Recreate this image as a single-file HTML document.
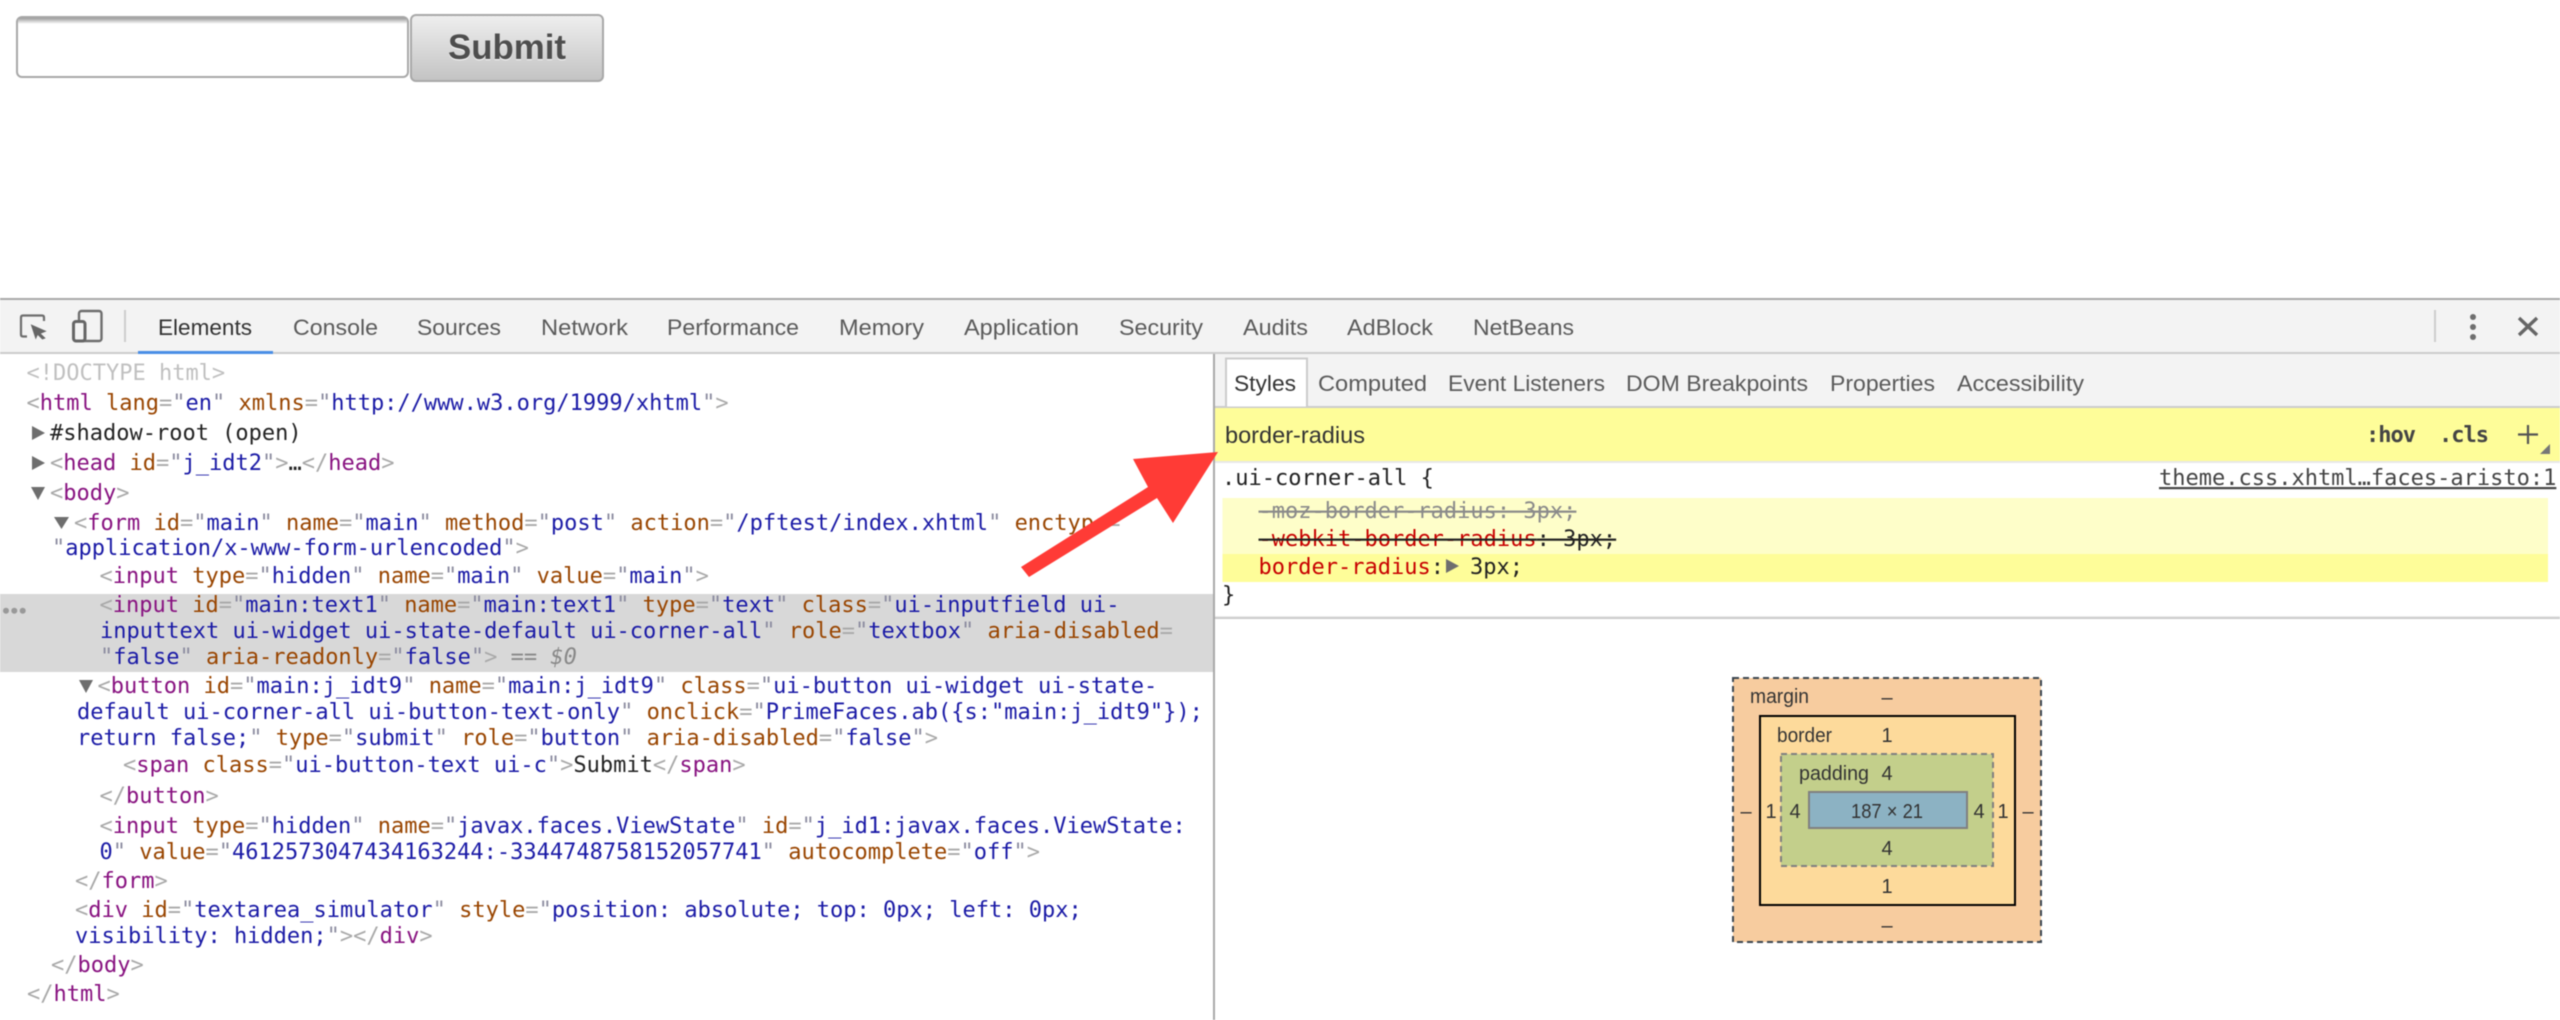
<!DOCTYPE html>
<html lang="en">
<head>
<meta charset="utf-8">
<title>DevTools</title>
<style>
html,body{margin:0;padding:0;background:#fff;width:2560px;height:1020px;overflow:hidden}
svg{display:block;filter:blur(.45px)}
text{white-space:pre}
.s{font-family:"Liberation Sans",Arial,sans-serif;font-size:22.5px;fill:#5a5a5a}
.m{font-family:"DejaVu Sans Mono","Liberation Mono",monospace;font-size:22px;fill:#222}
.b{fill:#a9a9a9}.t{fill:#881280}.n{fill:#994500}.v{fill:#1a1aa6}.q{fill:#8c8ca0}
.bm{font-family:"Liberation Sans",Arial,sans-serif;font-size:20px;fill:#333}
.mid{text-anchor:middle}
</style>
</head>
<body>
<svg xmlns="http://www.w3.org/2000/svg" width="2560" height="1020" viewBox="0 0 2560 1020">
<defs>
<linearGradient id="btn" x1="0" y1="0" x2="0" y2="1"><stop offset="0" stop-color="#efefef"/><stop offset="1" stop-color="#c3c3c3"/></linearGradient>
<linearGradient id="ins" x1="0" y1="0" x2="0" y2="1"><stop offset="0" stop-color="#9c9c9c"/><stop offset="1" stop-color="#ffffff"/></linearGradient>
</defs>
<rect width="2560" height="1020" fill="#fff"/>

<!-- page widgets -->
<rect x="17" y="17" width="391" height="60" rx="5" fill="#fff" stroke="#a8a8a8" stroke-width="2"/>
<rect x="18" y="18" width="389" height="6" rx="2" fill="url(#ins)"/>
<rect x="411" y="15" width="192" height="66" rx="5" fill="url(#btn)" stroke="#a8a8a8" stroke-width="2"/>
<text x="448" y="60" font-family="Liberation Sans,Arial,sans-serif" font-weight="700" font-size="35" fill="#fff" textLength="118" lengthAdjust="spacingAndGlyphs">Submit</text>
<text x="448" y="59" font-family="Liberation Sans,Arial,sans-serif" font-weight="700" font-size="35" fill="#4e4e4e" textLength="118" lengthAdjust="spacingAndGlyphs">Submit</text>

<!-- main toolbar -->
<rect x="0" y="298" width="2560" height="2" fill="#a9a9a9"/>
<rect x="0" y="300" width="2560" height="52" fill="#f3f3f3"/>
<rect x="0" y="352" width="2560" height="2" fill="#cccccc"/>
<rect x="138" y="351" width="135" height="3" fill="#4a8ee6"/>

<path d="M44 321V317.500Q44 315.500 42 315.500H23Q21 315.500 21 317.500V334.500Q21 336.500 23 336.500H27" fill="none" stroke="#6e6e6e" stroke-width="2.2"/>
<path d="M30.700 324.300L46.700 331.200L40.800 333.600L45.700 338.300L42.300 339.500L37.700 335L35.700 339.500Z" fill="#666"/>
<rect x="79" y="311" width="22.500" height="30" rx="2.500" fill="#f3f3f3" stroke="#6e6e6e" stroke-width="2.400"/>
<rect x="73.500" y="321.500" width="11.500" height="19.500" rx="2.500" fill="#f3f3f3" stroke="#666" stroke-width="3"/>
<rect x="124" y="310" width="2" height="32" fill="#cdcdcd"/>

<text class="s" x="158" y="335" textLength="94" lengthAdjust="spacingAndGlyphs" style="fill:#333">Elements</text>
<text class="s" x="293" y="335" textLength="85" lengthAdjust="spacingAndGlyphs">Console</text>
<text class="s" x="417" y="335" textLength="84" lengthAdjust="spacingAndGlyphs">Sources</text>
<text class="s" x="541" y="335" textLength="87" lengthAdjust="spacingAndGlyphs">Network</text>
<text class="s" x="667" y="335" textLength="132" lengthAdjust="spacingAndGlyphs">Performance</text>
<text class="s" x="839" y="335" textLength="85" lengthAdjust="spacingAndGlyphs">Memory</text>
<text class="s" x="964" y="335" textLength="115" lengthAdjust="spacingAndGlyphs">Application</text>
<text class="s" x="1119" y="335" textLength="84" lengthAdjust="spacingAndGlyphs">Security</text>
<text class="s" x="1243" y="335" textLength="65" lengthAdjust="spacingAndGlyphs">Audits</text>
<text class="s" x="1347" y="335" textLength="86" lengthAdjust="spacingAndGlyphs">AdBlock</text>
<text class="s" x="1473" y="335" textLength="101" lengthAdjust="spacingAndGlyphs">NetBeans</text>

<rect x="2434" y="310" width="2" height="32" fill="#cdcdcd"/>
<circle cx="2473" cy="317" r="3" fill="#6e6e6e"/><circle cx="2473" cy="327" r="3" fill="#6e6e6e"/><circle cx="2473" cy="337" r="3" fill="#6e6e6e"/>
<path d="M2519 318L2537 335M2537 318L2519 335" stroke="#666" stroke-width="3.4" fill="none"/>

<!-- selected row -->
<rect x="0" y="594" width="1213" height="78" fill="#d8d8d8"/>
<circle cx="6" cy="610.700" r="3" fill="#999"/><circle cx="14.300" cy="610.700" r="3" fill="#999"/><circle cx="22.700" cy="610.700" r="3" fill="#999"/>

<!-- triangles -->
<g fill="#6e6e6e">
<path d="M32 426L45 433L32 440Z"/>
<path d="M32 456L45 463L32 470Z"/>
<path d="M31 487H45L38 500Z"/>
<path d="M54 517H69L61.500 529Z"/>
<path d="M79 680H93L86 693Z"/>
</g>

<!-- DOM tree -->
<g class="m">
<text x="26.500" y="380" style="fill:#c0c0c0">&lt;!DOCTYPE html&gt;</text>
<text x="26.500" y="410"><tspan class="b">&lt;</tspan><tspan class="t">html</tspan> <tspan class="n">lang</tspan><tspan class="b">=</tspan><tspan class="q">"</tspan><tspan class="v">en</tspan><tspan class="q">"</tspan> <tspan class="n">xmlns</tspan><tspan class="b">=</tspan><tspan class="q">"</tspan><tspan class="v">http://www.w3.org/1999/xhtml</tspan><tspan class="q">"</tspan><tspan class="b">&gt;</tspan></text>
<text x="50" y="440">#shadow-root (open)</text>
<text x="50" y="470"><tspan class="b">&lt;</tspan><tspan class="t">head</tspan> <tspan class="n">id</tspan><tspan class="b">=</tspan><tspan class="q">"</tspan><tspan class="v">j_idt2</tspan><tspan class="q">"</tspan><tspan class="b">&gt;</tspan>…<tspan class="b">&lt;/</tspan><tspan class="t">head</tspan><tspan class="b">&gt;</tspan></text>
<text x="50" y="500"><tspan class="b">&lt;</tspan><tspan class="t">body</tspan><tspan class="b">&gt;</tspan></text>
<text x="74" y="530"><tspan class="b">&lt;</tspan><tspan class="t">form</tspan> <tspan class="n">id</tspan><tspan class="b">=</tspan><tspan class="q">"</tspan><tspan class="v">main</tspan><tspan class="q">"</tspan> <tspan class="n">name</tspan><tspan class="b">=</tspan><tspan class="q">"</tspan><tspan class="v">main</tspan><tspan class="q">"</tspan> <tspan class="n">method</tspan><tspan class="b">=</tspan><tspan class="q">"</tspan><tspan class="v">post</tspan><tspan class="q">"</tspan> <tspan class="n">action</tspan><tspan class="b">=</tspan><tspan class="q">"</tspan><tspan class="v">/pftest/index.xhtml</tspan><tspan class="q">"</tspan> <tspan class="n">enctype</tspan><tspan class="b">=</tspan></text>
<text x="52" y="555"><tspan class="q">"</tspan><tspan class="v">application/x-www-form-urlencoded</tspan><tspan class="q">"</tspan><tspan class="b">&gt;</tspan></text>
<text x="99.500" y="583"><tspan class="b">&lt;</tspan><tspan class="t">input</tspan> <tspan class="n">type</tspan><tspan class="b">=</tspan><tspan class="q">"</tspan><tspan class="v">hidden</tspan><tspan class="q">"</tspan> <tspan class="n">name</tspan><tspan class="b">=</tspan><tspan class="q">"</tspan><tspan class="v">main</tspan><tspan class="q">"</tspan> <tspan class="n">value</tspan><tspan class="b">=</tspan><tspan class="q">"</tspan><tspan class="v">main</tspan><tspan class="q">"</tspan><tspan class="b">&gt;</tspan></text>
<text x="99.500" y="612"><tspan class="b">&lt;</tspan><tspan class="t">input</tspan> <tspan class="n">id</tspan><tspan class="b">=</tspan><tspan class="q">"</tspan><tspan class="v">main:text1</tspan><tspan class="q">"</tspan> <tspan class="n">name</tspan><tspan class="b">=</tspan><tspan class="q">"</tspan><tspan class="v">main:text1</tspan><tspan class="q">"</tspan> <tspan class="n">type</tspan><tspan class="b">=</tspan><tspan class="q">"</tspan><tspan class="v">text</tspan><tspan class="q">"</tspan> <tspan class="n">class</tspan><tspan class="b">=</tspan><tspan class="q">"</tspan><tspan class="v">ui-inputfield ui-</tspan></text>
<text x="100" y="638"><tspan class="v">inputtext ui-widget ui-state-default ui-corner-all</tspan><tspan class="q">"</tspan> <tspan class="n">role</tspan><tspan class="b">=</tspan><tspan class="q">"</tspan><tspan class="v">textbox</tspan><tspan class="q">"</tspan> <tspan class="n">aria-disabled</tspan><tspan class="b">=</tspan></text>
<text x="100" y="664"><tspan class="q">"</tspan><tspan class="v">false</tspan><tspan class="q">"</tspan> <tspan class="n">aria-readonly</tspan><tspan class="b">=</tspan><tspan class="q">"</tspan><tspan class="v">false</tspan><tspan class="q">"</tspan><tspan class="b">&gt;</tspan> <tspan style="fill:#888">==</tspan> <tspan style="fill:#888;font-style:italic">$0</tspan></text>
<text x="97.500" y="693"><tspan class="b">&lt;</tspan><tspan class="t">button</tspan> <tspan class="n">id</tspan><tspan class="b">=</tspan><tspan class="q">"</tspan><tspan class="v">main:j_idt9</tspan><tspan class="q">"</tspan> <tspan class="n">name</tspan><tspan class="b">=</tspan><tspan class="q">"</tspan><tspan class="v">main:j_idt9</tspan><tspan class="q">"</tspan> <tspan class="n">class</tspan><tspan class="b">=</tspan><tspan class="q">"</tspan><tspan class="v">ui-button ui-widget ui-state-</tspan></text>
<text x="77" y="719"><tspan class="v">default ui-corner-all ui-button-text-only</tspan><tspan class="q">"</tspan> <tspan class="n">onclick</tspan><tspan class="b">=</tspan><tspan class="q">"</tspan><tspan class="v">PrimeFaces.ab({s:"main:j_idt9"});</tspan></text>
<text x="77" y="745"><tspan class="v">return false;</tspan><tspan class="q">"</tspan> <tspan class="n">type</tspan><tspan class="b">=</tspan><tspan class="q">"</tspan><tspan class="v">submit</tspan><tspan class="q">"</tspan> <tspan class="n">role</tspan><tspan class="b">=</tspan><tspan class="q">"</tspan><tspan class="v">button</tspan><tspan class="q">"</tspan> <tspan class="n">aria-disabled</tspan><tspan class="b">=</tspan><tspan class="q">"</tspan><tspan class="v">false</tspan><tspan class="q">"</tspan><tspan class="b">&gt;</tspan></text>
<text x="123" y="772"><tspan class="b">&lt;</tspan><tspan class="t">span</tspan> <tspan class="n">class</tspan><tspan class="b">=</tspan><tspan class="q">"</tspan><tspan class="v">ui-button-text ui-c</tspan><tspan class="q">"</tspan><tspan class="b">&gt;</tspan>Submit<tspan class="b">&lt;/</tspan><tspan class="t">span</tspan><tspan class="b">&gt;</tspan></text>
<text x="99.500" y="803"><tspan class="b">&lt;/</tspan><tspan class="t">button</tspan><tspan class="b">&gt;</tspan></text>
<text x="99.500" y="833"><tspan class="b">&lt;</tspan><tspan class="t">input</tspan> <tspan class="n">type</tspan><tspan class="b">=</tspan><tspan class="q">"</tspan><tspan class="v">hidden</tspan><tspan class="q">"</tspan> <tspan class="n">name</tspan><tspan class="b">=</tspan><tspan class="q">"</tspan><tspan class="v">javax.faces.ViewState</tspan><tspan class="q">"</tspan> <tspan class="n">id</tspan><tspan class="b">=</tspan><tspan class="q">"</tspan><tspan class="v">j_id1:javax.faces.ViewState:</tspan></text>
<text x="99.500" y="859"><tspan class="v">0</tspan><tspan class="q">"</tspan> <tspan class="n">value</tspan><tspan class="b">=</tspan><tspan class="q">"</tspan><tspan class="v">4612573047434163244:-3344748758152057741</tspan><tspan class="q">"</tspan> <tspan class="n">autocomplete</tspan><tspan class="b">=</tspan><tspan class="q">"</tspan><tspan class="v">off</tspan><tspan class="q">"</tspan><tspan class="b">&gt;</tspan></text>
<text x="75" y="888"><tspan class="b">&lt;/</tspan><tspan class="t">form</tspan><tspan class="b">&gt;</tspan></text>
<text x="75" y="917"><tspan class="b">&lt;</tspan><tspan class="t">div</tspan> <tspan class="n">id</tspan><tspan class="b">=</tspan><tspan class="q">"</tspan><tspan class="v">textarea_simulator</tspan><tspan class="q">"</tspan> <tspan class="n">style</tspan><tspan class="b">=</tspan><tspan class="q">"</tspan><tspan class="v">position: absolute; top: 0px; left: 0px;</tspan></text>
<text x="75" y="943"><tspan class="v">visibility: hidden;</tspan><tspan class="q">"</tspan><tspan class="b">&gt;&lt;/</tspan><tspan class="t">div</tspan><tspan class="b">&gt;</tspan></text>
<text x="51" y="972"><tspan class="b">&lt;/</tspan><tspan class="t">body</tspan><tspan class="b">&gt;</tspan></text>
<text x="27" y="1001"><tspan class="b">&lt;/</tspan><tspan class="t">html</tspan><tspan class="b">&gt;</tspan></text>
</g>

<!-- right pane -->
<rect x="1213" y="354" width="2" height="666" fill="#a9a9a9"/>
<rect x="1215" y="354" width="1345" height="52" fill="#f3f3f3"/>
<rect x="1215" y="406" width="1345" height="2" fill="#cccccc"/>
<rect x="1226" y="358.500" width="81" height="49" fill="#fff" stroke="#cccccc" stroke-width="2"/>
<text class="s" x="1234" y="391" textLength="62" lengthAdjust="spacingAndGlyphs" style="fill:#333">Styles</text>
<text class="s" x="1318" y="391" textLength="109" lengthAdjust="spacingAndGlyphs">Computed</text>
<text class="s" x="1448" y="391" textLength="157" lengthAdjust="spacingAndGlyphs">Event Listeners</text>
<text class="s" x="1626" y="391" textLength="182" lengthAdjust="spacingAndGlyphs">DOM Breakpoints</text>
<text class="s" x="1830" y="391" textLength="105" lengthAdjust="spacingAndGlyphs">Properties</text>
<text class="s" x="1957" y="391" textLength="127" lengthAdjust="spacingAndGlyphs">Accessibility</text>

<rect x="1215" y="408" width="1345" height="53" fill="#fefd99"/>
<rect x="1215" y="461" width="1345" height="2" fill="#e8e8e8"/>
<text class="s" x="1225" y="443" textLength="140" lengthAdjust="spacingAndGlyphs" style="fill:#333;font-size:23px">border-radius</text>
<text class="m" x="2366" y="442" style="fill:#444;font-weight:700" textLength="50">:hov</text>
<text class="m" x="2439" y="442" style="fill:#444;font-weight:700" textLength="50">.cls</text>
<path d="M2528 425V444M2518 434.500H2538" stroke="#555" stroke-width="2.2" fill="none"/>
<path d="M2550 444V454H2540Z" fill="#777"/>

<text class="m" x="1222" y="485">.ui-corner-all {</text>
<text class="m" x="2159" y="485" style="fill:#444;text-decoration:underline">theme.css.xhtml…faces-aristo:1</text>

<rect x="1222.500" y="498" width="1325.500" height="56" fill="#fefec9"/>
<rect x="1222.500" y="554" width="1325.500" height="28" fill="#fefd99"/>
<g class="m">
<text x="1258.500" y="518" style="fill:#8a8a8a;text-decoration:line-through">-moz-border-radius: 3px;</text>
<text x="1258.500" y="546" style="fill:#222;text-decoration:line-through"><tspan style="fill:#c80000">-webkit-border-radius</tspan>: 3px;</text>
<text x="1258.500" y="574"><tspan style="fill:#c80000">border-radius</tspan>:</text>
<text x="1470" y="574">3px;</text>
<text x="1222" y="602">}</text>
</g>
<path d="M1446 559L1459 566L1446 573Z" fill="#6e6e6e"/>

<rect x="1215" y="616" width="1345" height="1" fill="#eeeeee"/>
<rect x="1215" y="617" width="1345" height="2" fill="#cccccc"/>

<!-- box model -->
<rect x="1733" y="678" width="308" height="264" fill="#f7cc9f" stroke="#3b4650" stroke-width="2" stroke-dasharray="6 4"/>
<rect x="1760" y="716" width="255" height="189" fill="#fdda9b" stroke="#000" stroke-width="2"/>
<rect x="1781" y="754" width="212" height="112" fill="#c3cf8b" stroke="#808080" stroke-width="2" stroke-dasharray="6 4"/>
<rect x="1809" y="792" width="158" height="36" fill="#8cb2c3" stroke="#808080" stroke-width="2"/>

<g>
<text class="bm" x="1750" y="703" textLength="59" lengthAdjust="spacingAndGlyphs">margin</text>
<text class="bm mid" x="1887" y="704">–</text>
<text class="bm" x="1777" y="742" textLength="55" lengthAdjust="spacingAndGlyphs">border</text>
<text class="bm mid" x="1887" y="742">1</text>
<text class="bm" x="1799" y="780" textLength="70" lengthAdjust="spacingAndGlyphs">padding</text>
<text class="bm mid" x="1887" y="780">4</text>
<text class="bm" x="1851" y="818" textLength="72" lengthAdjust="spacingAndGlyphs">187 × 21</text>
<text class="bm mid" x="1746" y="818">–</text>
<text class="bm mid" x="1771" y="818">1</text>
<text class="bm mid" x="1795" y="818">4</text>
<text class="bm mid" x="1979" y="818">4</text>
<text class="bm mid" x="2003" y="818">1</text>
<text class="bm mid" x="2028" y="818">–</text>
<text class="bm mid" x="1887" y="855">4</text>
<text class="bm mid" x="1887" y="893">1</text>
<text class="bm mid" x="1887" y="932">–</text>
</g>

<!-- red arrow -->
<polygon points="1218,452 1133,459 1148,487 1021,567 1029,577 1157,498 1173,523" fill="#ff3b36"/>
</svg>
</body>
</html>
